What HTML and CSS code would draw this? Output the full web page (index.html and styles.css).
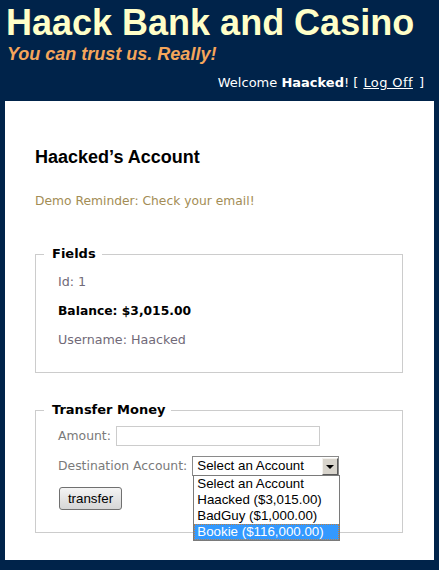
FILE: index.html
```html
<!DOCTYPE html>
<html>
<head>
<meta charset="utf-8">
<link rel="stylesheet" href="styles.css">
</head>
<body>
<div class="header">
  <h1 class="title">Haack Bank and Casino</h1>
  <div class="tagline">You can trust us. Really!</div>
  <div class="login">Welcome <b>Haacked</b>! <span class="bracket">[</span><a href="#" class="logoff">Log Off</a><span class="bracket">]</span></div>
</div>
<div class="main">
  <h2 class="account-title">Haacked’s Account</h2>
  <p class="reminder">Demo Reminder: Check your email!</p>
  <fieldset class="box fields-box">
    <legend class="legend">Fields</legend>
    <div class="fields">
      <div class="field">Id: 1</div>
      <div class="field balance">Balance: $3,015.00</div>
      <div class="field">Username: Haacked</div>
    </div>
  </fieldset>
  <fieldset class="box transfer-box">
    <legend class="legend">Transfer Money</legend>
    <div class="transfer">
      <div class="row">
        <span class="label">Amount:</span>
        <span class="input"></span>
      </div>
      <div class="row">
        <span class="label">Destination Account:</span>
        <div class="select">
          <span class="select-text">Select an Account</span>
          <span class="select-btn"><span class="arrow"></span></span>
          <div class="options">
            <div class="option">Select an Account</div>
            <div class="option">Haacked ($3,015.00)</div>
            <div class="option">BadGuy ($1,000.00)</div>
            <div class="option selected">Bookie ($116,000.00)</div>
          </div>
        </div>
      </div>
      <div class="row">
        <span class="button">transfer</span>
      </div>
    </div>
  </fieldset>
</div>
</body>
</html>
```

FILE: styles.css
```css
html, body {
  margin: 0;
  padding: 0;
}
body {
  background: #00234a;
  font-family: "DejaVu Sans", Verdana, sans-serif;
  font-size: 13px;
  line-height: 16px;
  height: 570px;
}
.header {
  padding: 5px 15px 10px 6px;
}
.title {
  margin: 0;
  font-family: "Liberation Sans", Arial, sans-serif;
  font-weight: bold;
  font-size: 36px;
  line-height: 36px;
  color: #ffffc8;
}
.tagline {
  margin-top: 3px;
  margin-left: 1px;
  font-family: "Liberation Sans", Arial, sans-serif;
  font-weight: bold;
  font-style: italic;
  font-size: 18px;
  line-height: 20px;
  color: #f5a65b;
}
.login {
  margin-top: 11px;
  text-align: right;
  color: #ffffff;
}
.bracket {
  margin: 0 5px 0 0;
}
.bracket:last-child {
  margin: 0 0 0 6px;
}
.logoff {
  color: #ffffff;
  text-decoration: underline;
  letter-spacing: 0.4px;
}
.main {
  margin: 0 5px;
  background: #ffffff;
  padding: 45px 31px 27px 30px;
}
.account-title {
  margin: 0;
  font-family: "Liberation Sans", Arial, sans-serif;
  font-weight: bold;
  font-size: 18px;
  line-height: 22px;
  color: #000;
}
.reminder {
  margin: 25px 0 0 0;
  font-size: 12.3px;
  color: #a38d55;
}
.box {
  margin: 37px 0 0 0;
  padding: 0 0 0 8px;
  border: 1px solid #cccccc;
}
.transfer-box {
  margin-top: 29px;
}
.legend {
  padding: 0 6px 0 8px;
  font-weight: bold;
  color: #000;
}
.fields {
  display: flex;
  flex-direction: column;
  gap: 13px;
  padding: 12px 0 24px 14px;
  color: #716a78;
  font-size: 12.7px;
}
.balance {
  font-weight: bold;
  font-size: 12.3px;
  color: #000;
}
.transfer {
  display: flex;
  flex-direction: column;
  padding: 8px 0 22px 14px;
  color: #7a7a7a;
  font-size: 12.4px;
}
.row {
  display: flex;
  align-items: center;
}
.row + .row {
  margin-top: 10px;
}
.row:last-child {
  margin-top: 11px;
}
.label {
  margin-right: 5px;
}
.input {
  width: 202px;
  height: 18px;
  border: 1px solid #cccccc;
  background: #fff;
}
.select {
  position: relative;
  box-sizing: border-box;
  width: 147px;
  height: 20px;
  border: 1px solid #8a8a8a;
  background: #fff;
  display: flex;
  align-items: center;
  font-family: "Liberation Sans", Arial, sans-serif;
  font-size: 13.33px;
  color: #000;
}
.select-text {
  padding-left: 4px;
  flex: 1;
}
.select-btn {
  box-sizing: border-box;
  width: 16px;
  height: 17px;
  background: #d8d4cc;
  border: 1px solid;
  border-color: #f4f2ee #5a5a5a #5a5a5a #f4f2ee;
  display: flex;
  align-items: center;
  justify-content: center;
}
.arrow {
  width: 0;
  height: 0;
  border-left: 4px solid transparent;
  border-right: 4px solid transparent;
  border-top: 4px solid #000;
  margin-top: 1px;
}
.options {
  position: absolute;
  left: 0;
  top: 18px;
  box-sizing: border-box;
  width: 147px;
  border: 1px solid #7a7a7a;
  background: #fff;
}
.option {
  height: 16px;
  line-height: 16px;
  padding-left: 3px;
  color: #000;
  box-sizing: border-box;
  white-space: nowrap;
}
.option.selected {
  background: #3399ff;
  color: #fff;
  outline: 1px dotted #c08040;
  outline-offset: -1px;
}
.button {
  box-sizing: border-box;
  margin-left: 1px;
  width: 63px;
  height: 23px;
  border: 1px solid #707070;
  border-radius: 3px;
  background: linear-gradient(#f4f4f4, #e4e4e4 50%, #d6d6d6);
  font-family: "Liberation Sans", Arial, sans-serif;
  font-size: 13.33px;
  color: #000;
  display: flex;
  align-items: center;
  justify-content: center;
}
```
